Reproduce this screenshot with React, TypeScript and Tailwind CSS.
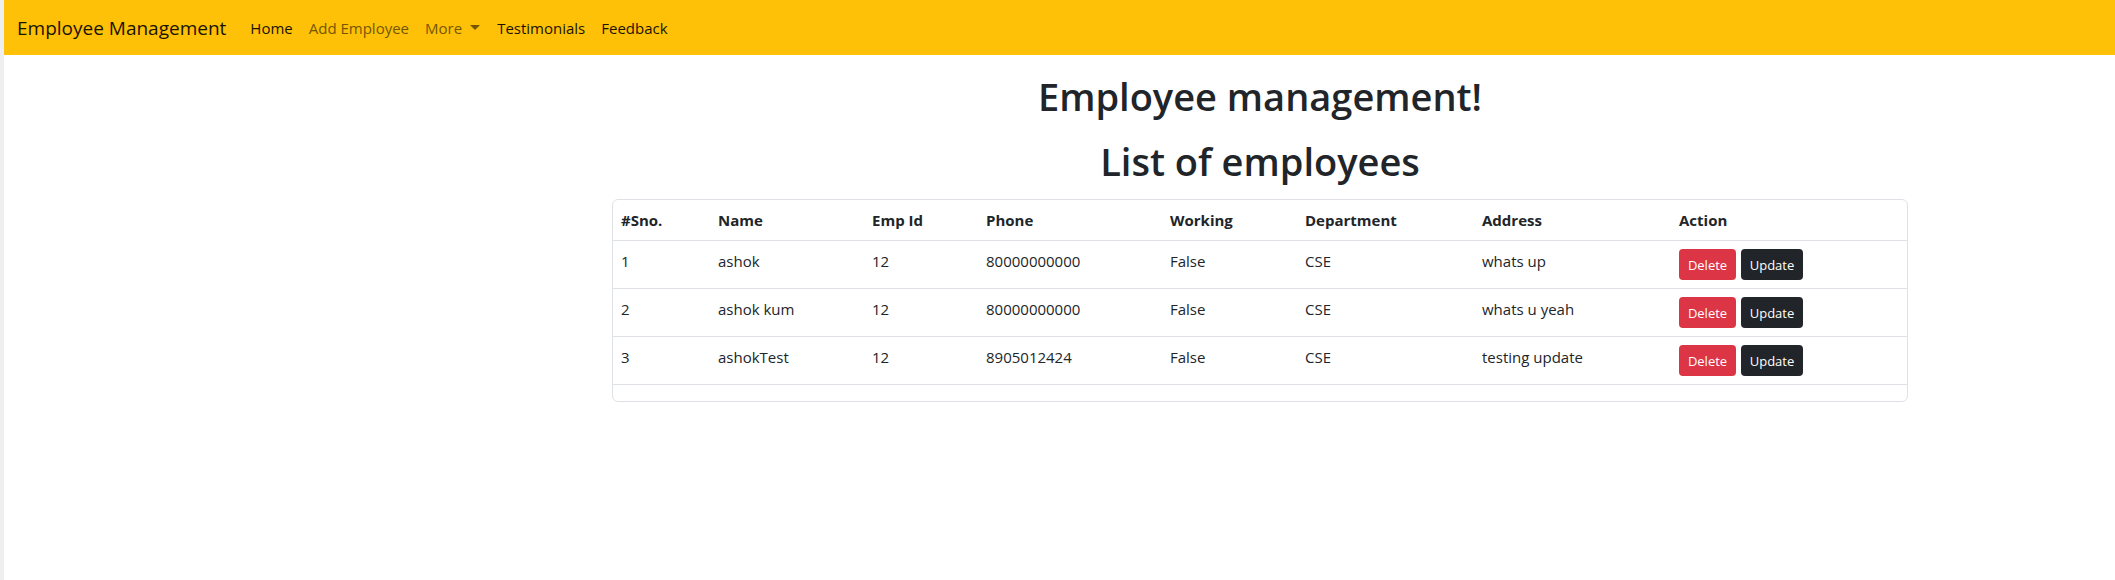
import React from "react";

type Row = {
  sno: string;
  name: string;
  empId: string;
  phone: string;
  working: string;
  dept: string;
  address: string;
};

const rows: Row[] = [
  { sno: "1", name: "ashok", empId: "12", phone: "80000000000", working: "False", dept: "CSE", address: "whats up" },
  { sno: "2", name: "ashok kum", empId: "12", phone: "80000000000", working: "False", dept: "CSE", address: "whats u yeah" },
  { sno: "3", name: "ashokTest", empId: "12", phone: "8905012424", working: "False", dept: "CSE", address: "testing update" },
];

const headers = ["#Sno.", "Name", "Emp Id", "Phone", "Working", "Department", "Address", "Action"];

export default function App() {
  return (
    <div className="flex min-h-[580px] w-full bg-white font-['Open_Sans','Noto_Sans',sans-serif] text-[#212529]">
      <div className="w-[4px] shrink-0 bg-[#efeff1]" />
      <div className="min-w-0 flex-1">
        <nav className="flex h-[55px] items-center bg-[#ffc107] pl-[13px]">
          <span className="mr-[16px] text-[19px] leading-[30px] text-[#1a1300]">Employee Management</span>
          <div className="flex items-center text-[15px] leading-[24px]">
            <span className="px-[8px] text-[#1a1300]">Home</span>
            <span className="px-[8px] text-[#735703]">Add Employee</span>
            <span className="flex items-center px-[8px] text-[#735703]">
              More
              <span className="ml-[8px] mr-[1px] inline-block h-0 w-0 border-x-[5px] border-t-[5px] border-x-transparent border-t-[#735703]" />
            </span>
            <span className="px-[8px] text-[#1a1300]">Testimonials</span>
            <span className="px-[8px] text-[#1a1300]">Feedback</span>
          </div>
        </nav>
        <main className="ml-[608px] w-[1296px]">
          <h1 className="mt-[17px] text-center text-[38px] font-semibold leading-[48px]">Employee management!</h1>
          <h1 className="mt-[17px] text-center text-[38px] font-semibold leading-[48px]">List of employees</h1>
          <div className="mt-[14px] rounded-[6px] border border-[#dee2e6]">
            <table className="mb-4 w-full table-fixed border-collapse text-[15px] leading-[24px]">
              <colgroup>
                <col className="w-[97px]" />
                <col className="w-[154px]" />
                <col className="w-[114px]" />
                <col className="w-[184px]" />
                <col className="w-[135px]" />
                <col className="w-[177px]" />
                <col className="w-[197px]" />
                <col />
              </colgroup>
              <thead>
                <tr>
                  {headers.map((h) => (
                    <th key={h} className="border-b border-[#dee2e6] p-[8px] text-left align-top font-bold">
                      {h}
                    </th>
                  ))}
                </tr>
              </thead>
              <tbody>
                {rows.map((r) => (
                  <tr key={r.sno}>
                    <td className="border-b border-[#dee2e6] p-[8px] align-top">{r.sno}</td>
                    <td className="border-b border-[#dee2e6] p-[8px] align-top">{r.name}</td>
                    <td className="border-b border-[#dee2e6] p-[8px] align-top">{r.empId}</td>
                    <td className="border-b border-[#dee2e6] p-[8px] align-top">{r.phone}</td>
                    <td className="border-b border-[#dee2e6] p-[8px] align-top">{r.working}</td>
                    <td className="border-b border-[#dee2e6] p-[8px] align-top">{r.dept}</td>
                    <td className="border-b border-[#dee2e6] p-[8px] align-top">{r.address}</td>
                    <td className="border-b border-[#dee2e6] p-[8px] align-top">
                      <div className="flex gap-[5px]">
                        <button className="flex h-[31px] w-[57px] items-center justify-center rounded-[4px] bg-[#dc3545] text-[13px] text-white">
                          Delete
                        </button>
                        <button className="flex h-[31px] w-[62px] items-center justify-center rounded-[4px] bg-[#212529] text-[13px] text-white">
                          Update
                        </button>
                      </div>
                    </td>
                  </tr>
                ))}
              </tbody>
            </table>
          </div>
        </main>
      </div>
    </div>
  );
}
